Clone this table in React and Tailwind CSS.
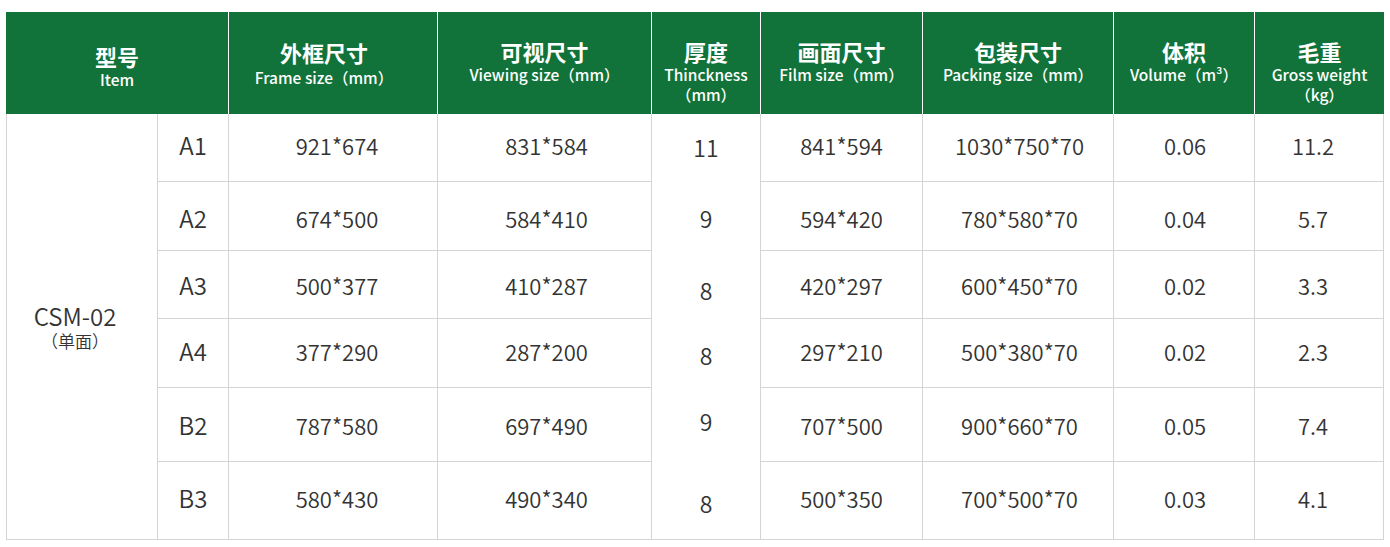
import React from 'react'

const font = { fontFamily: '"Noto Sans CJK SC", "Noto Sans", sans-serif' }

const rows = [
  { model: 'A1', frame: '921*674', view: '831*584', thick: '11', film: '841*594', pack: '1030*750*70', vol: '0.06', weight: '11.2' },
  { model: 'A2', frame: '674*500', view: '584*410', thick: '9', film: '594*420', pack: '780*580*70', vol: '0.04', weight: '5.7' },
  { model: 'A3', frame: '500*377', view: '410*287', thick: '8', film: '420*297', pack: '600*450*70', vol: '0.02', weight: '3.3' },
  { model: 'A4', frame: '377*290', view: '287*200', thick: '8', film: '297*210', pack: '500*380*70', vol: '0.02', weight: '2.3' },
  { model: 'B2', frame: '787*580', view: '697*490', thick: '9', film: '707*500', pack: '900*660*70', vol: '0.05', weight: '7.4' },
  { model: 'B3', frame: '580*430', view: '490*340', thick: '8', film: '500*350', pack: '700*500*70', vol: '0.03', weight: '4.1' },
]

// per-row nudges so the numbers sit where they do in the artwork
const rowShift = ['pb-[6px]', 'pt-[4px]', 'pt-[1px]', 'pb-[4px]', 'pt-[1px]', 'pb-[6px]']
const thickShift = ['pb-[1px]', 'pt-[4px]', 'pt-[11px]', 'pt-[4px]', 'pb-[7px]', 'pt-[5px]']

const cols = 'grid grid-cols-[151px_71px_209px_214px_109px_162px_191px_141px_130px]'

function Head({ zh, en, en2, className = 'pt-[26px]', zhLead = 'leading-[26px]' }) {
  return (
    <div className={`flex flex-col items-center border-l border-white text-white ${className}`}>
      <span className={`text-[22px] font-bold ${zhLead}`}>{zh}</span>
      <span className="text-[15.5px] font-medium leading-[20px]">{en}</span>
      {en2 ? <span className="text-[15.5px] font-medium leading-[20px]">{en2}</span> : null}
    </div>
  )
}

function Cell({ children, shift, last, className = '' }) {
  return (
    <div
      className={`flex items-center justify-center border-l border-b border-[#d4d4d4] text-[22px] font-[350] leading-none text-[#333333] ${shift} ${
        last ? 'border-r' : ''
      } ${className}`}
    >
      {children}
    </div>
  )
}

export default function App() {
  return (
    <div className="min-h-[547px] w-[1390px] bg-white pl-[6px] pt-[12px]" style={font}>
      <div className="w-[1378px]">
        {/* header */}
        <div className={`${cols} h-[102px] bg-[#12733a]`}>
          <div className="col-span-2 flex flex-col items-center pt-[31px] text-white">
            <span className="text-[22px] font-bold leading-[26px]">型号</span>
            <span className="text-[15.5px] font-medium leading-[20px]">Item</span>
          </div>
          <Head zh="外框尺寸" en="Frame size（mm）" className="pt-[26px] pr-[18px]" zhLead="leading-[29px]" />
          <Head zh="可视尺寸" en="Viewing size（mm）" />
          <Head zh="厚度" en="Thinckness" en2="（mm）" />
          <Head zh="画面尺寸" en="Film size（mm）" />
          <Head zh="包装尺寸" en="Packing size（mm）" />
          <Head zh="体积" en="Volume（m³）" />
          <Head zh="毛重" en="Gross weight" en2="（kg）" />
        </div>

        {/* body */}
        <div className={`${cols} grid-rows-[68px_69px_68px_69px_74px_78px]`}>
          <div className="row-span-6 flex flex-col items-center justify-center border-l border-b border-[#d4d4d4] pr-[14px] font-[350] text-[#333333]">
            <span className="text-[24px] leading-[28px]">CSM-02</span>
            <span className="text-[17px] leading-[22px]">（单面）</span>
          </div>
          {rows.map((r, i) => (
            <React.Fragment key={r.model}>
              <Cell shift={rowShift[i]} className="text-[24px]">{r.model}</Cell>
              <Cell shift={rowShift[i]} className="pl-[8px]">{r.frame}</Cell>
              <Cell shift={rowShift[i]} className="pl-[4px]">{r.view}</Cell>
              <div
                className={`flex items-center justify-center border-l border-[#d4d4d4] text-[23px] font-[350] leading-none text-[#333333] ${thickShift[i]} ${
                  i === rows.length - 1 ? 'border-b' : ''
                }`}
              >
                {r.thick}
              </div>
              <Cell shift={rowShift[i]}>{r.film}</Cell>
              <Cell shift={rowShift[i]} className="pl-[3px]">{r.pack}</Cell>
              <Cell shift={rowShift[i]} className="pl-[2px]">{r.vol}</Cell>
              <Cell shift={rowShift[i]} last className="pr-[12px]">{r.weight}</Cell>
            </React.Fragment>
          ))}
        </div>
      </div>
    </div>
  )
}
